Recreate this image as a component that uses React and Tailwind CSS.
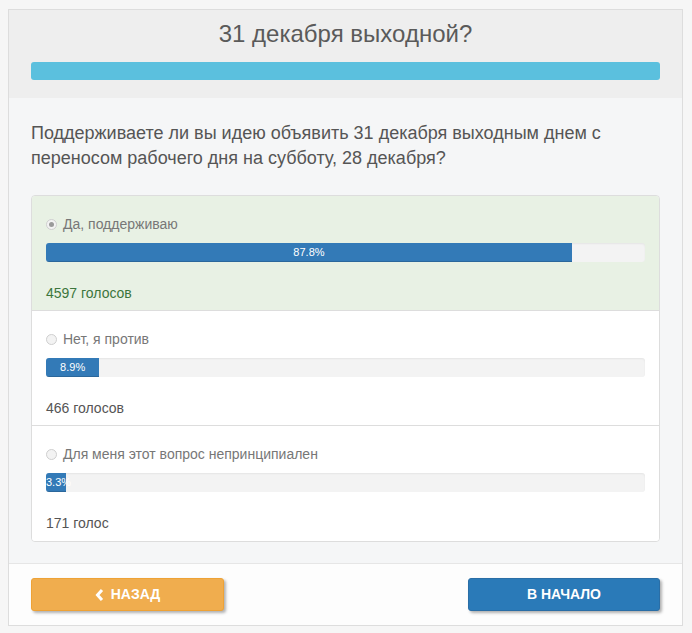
import React from "react";

const ANSWERS = [
  { label: "Да, поддерживаю", pct: 87.8, votes: "4597 голосов", chosen: true },
  { label: "Нет, я против", pct: 8.9, votes: "466 голосов" },
  { label: "Для меня этот вопрос непринципиален", pct: 3.3, votes: "171 голос" },
];

function Radio({ checked }) {
  return (
    <span className="w-[11px] h-[11px] rounded-full border border-[#cfcfcf] bg-[#f3f3f3] flex items-center justify-center shrink-0">
      {checked && <span className="w-[5px] h-[5px] rounded-full bg-[#9a9a9a]" />}
    </span>
  );
}

function Answer({ a, last }) {
  return (
    <div
      className={
        "px-[14px] pt-[20px] pb-[10px] h-[115px] " +
        (a.chosen ? "bg-[#e8f1e4] " : "bg-white ") +
        (last ? "" : "border-b border-[#dddddd]")
      }
    >
      <div className="flex items-center gap-[6px] h-[16px]">
        <Radio checked={a.chosen} />
        <span className="text-[14px] text-[#777777]">{a.label}</span>
      </div>
      <div className="mt-[11px] h-[19px] bg-[#f3f3f3] rounded-[3px] overflow-hidden shadow-[inset_0_1px_2px_rgba(0,0,0,0.06)]">
        <div
          className="h-full bg-[#337ab7] text-white text-[11px] leading-[19px] text-center whitespace-nowrap shadow-[inset_0_-1px_0_rgba(0,0,0,0.15)]"
          style={{ width: `${a.pct}%` }}
        >
          {a.pct}%
        </div>
      </div>
      <div className={"mt-[21px] text-[14px] " + (a.chosen ? "text-[#3c763d]" : "text-[#555555]")}>
        {a.votes}
      </div>
    </div>
  );
}

export default function App() {
  return (
    <div className="min-h-[633px] bg-[#f6f6f6] pt-[9px] px-[8px] font-['Liberation_Sans',sans-serif]">
      <div className="w-[675px] border border-[#dddddd] bg-white">
        <div className="bg-[#eeeeee] px-[22px] pt-[10px] pb-[18px]">
          <h1 className="text-center text-[24px] leading-[28px] text-[#5a5a5a]">
            31 декабря выходной?
          </h1>
          <div className="mt-[14px] h-[18px] rounded-[3px] bg-[#5bc0de]" />
        </div>
        <div className="bg-[#f5f6f7] px-[22px] pt-[23px] pb-[21px] border-b border-[#e6e6e6]">
          <p className="text-[18px] leading-[25px] text-[#555555]">
            Поддерживаете ли вы идею объявить 31 декабря выходным днем с переносом рабочего дня на субботу, 28 декабря?
          </p>
          <div className="mt-[24px] border border-[#dddddd] rounded-[4px] overflow-hidden">
            {ANSWERS.map((a, i) => (
              <Answer key={i} a={a} last={i === ANSWERS.length - 1} />
            ))}
          </div>
        </div>
        <div className="bg-[#fdfdfd] px-[22px] pt-[14px] pb-[14px] flex justify-between">
          <button className="w-[193px] h-[33px] rounded-[3px] bg-[#f0ad4e] border border-[#eea236] text-white font-bold text-[14px] flex items-center justify-center gap-[6px] shadow-[2px_2px_3px_rgba(0,0,0,0.3)]">
            <svg width="10" height="12" viewBox="0 0 10 12">
              <path d="M7 1 L2.5 6 L7 11" fill="none" stroke="white" strokeWidth="3" />
            </svg>
            НАЗАД
          </button>
          <button className="w-[192px] h-[33px] rounded-[3px] bg-[#2a7ab8] border border-[#2a6ea6] text-white font-bold text-[14px] flex items-center justify-center shadow-[2px_2px_3px_rgba(0,0,0,0.3)]">
            В НАЧАЛО
          </button>
        </div>
      </div>
    </div>
  );
}
